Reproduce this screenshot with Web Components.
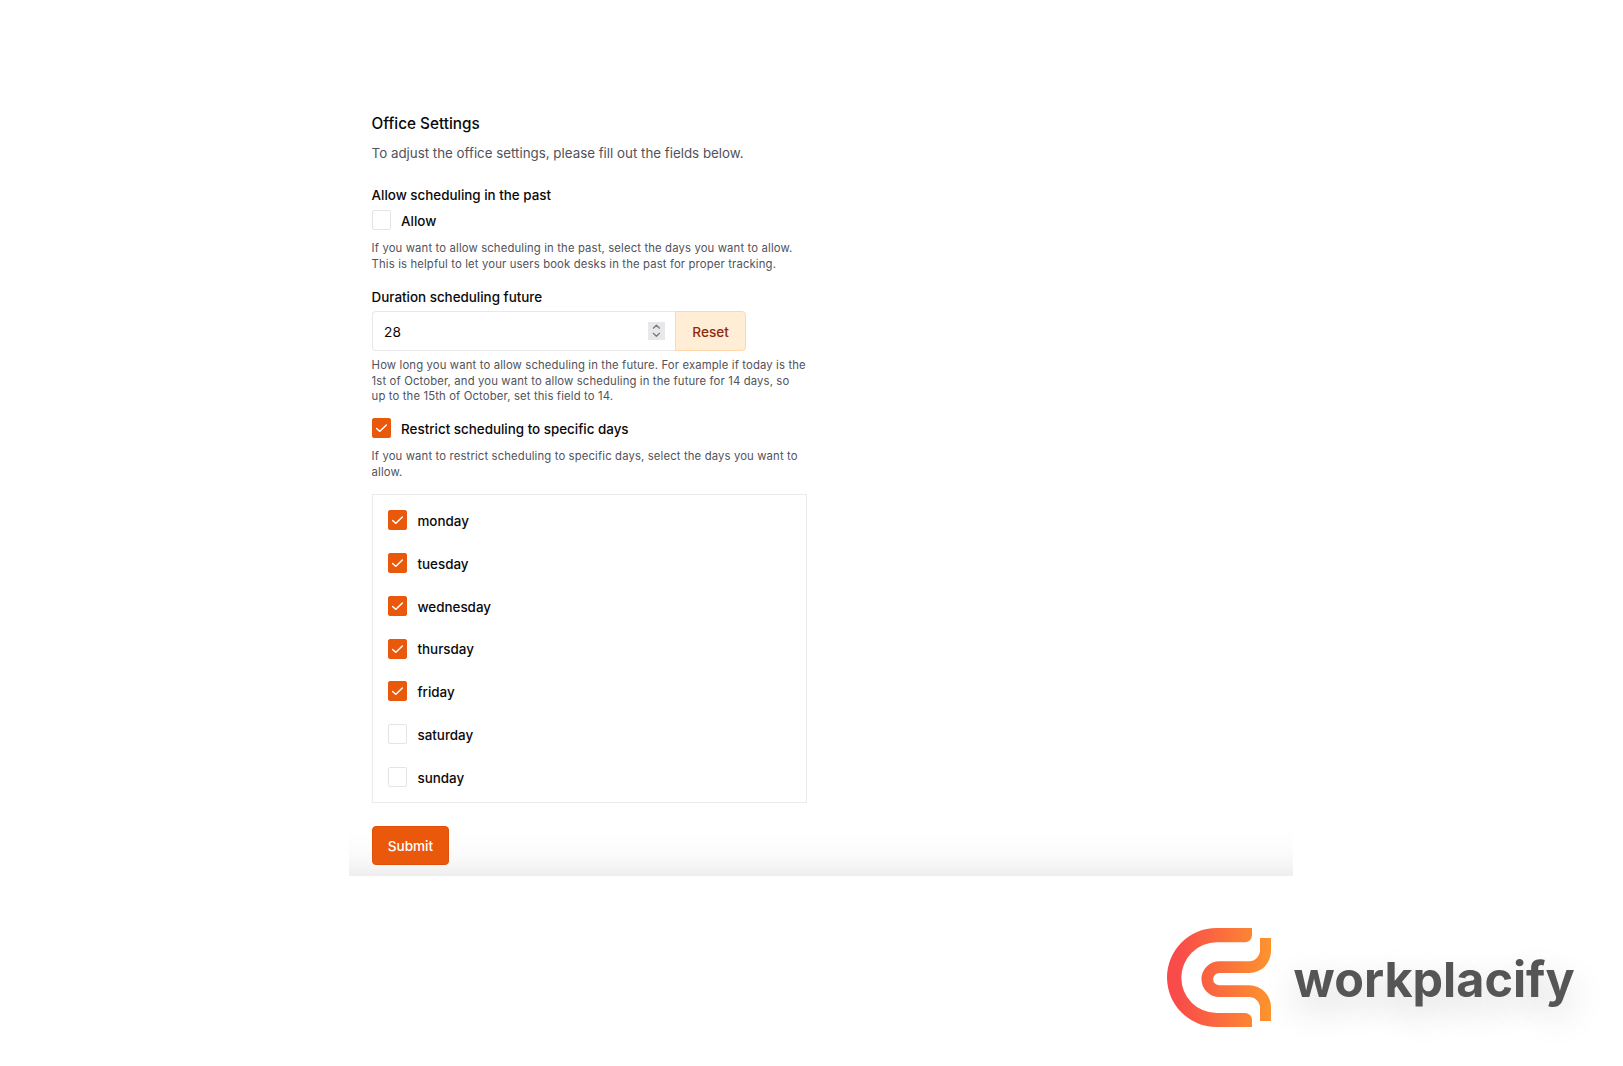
<!DOCTYPE html>
<html lang="en">
<head>
<meta charset="utf-8">
<title>Office Settings</title>
<style>
html,body{margin:0;background:#fff;height:1066px;overflow:hidden}
body{font-family:Inter,"Liberation Sans",sans-serif;color:#09090b}
</style>
</head>
<body>
<office-page>
  <settings-panel>
    <panel-header style="margin-top:112px">Office Settings<span slot="sub">To adjust the office settings, please fill out the fields below.</span></panel-header>
    <field-label style="margin-top:22px">Allow scheduling in the past</field-label>
    <check-box style="margin-top:5.3px">Allow</check-box>
    <help-text style="margin-top:10.7px">If you want to allow scheduling in the past, select the days you want to allow.<br>This is helpful to let your users book desks in the past for proper tracking.</help-text>
    <field-label style="margin-top:14.8px">Duration scheduling future</field-label>
    <number-field style="margin-top:4px" value="28">Reset</number-field>
    <help-text style="margin-top:7.3px">How long you want to allow scheduling in the future. For example if today is the<br>1st of October, and you want to allow scheduling in the future for 14 days, so<br>up to the 15th of October, set this field to 14.</help-text>
    <check-box style="margin-top:13.4px" checked>Restrict scheduling to specific days</check-box>
    <help-text style="margin-top:10.7px">If you want to restrict scheduling to specific days, select the days you want to<br>allow.</help-text>
    <day-list style="margin-top:13.8px">
      <check-box checked>monday</check-box>
      <check-box checked>tuesday</check-box>
      <check-box checked>wednesday</check-box>
      <check-box checked>thursday</check-box>
      <check-box checked>friday</check-box>
      <check-box>saturday</check-box>
      <check-box>sunday</check-box>
    </day-list>
    <submit-button style="margin-top:23px">Submit</submit-button>
  </settings-panel>
  <brand-logo>workplacify</brand-logo>
</office-page>
<script>
const define = (name, html) => customElements.define(name, class extends HTMLElement {
  constructor() {
    super();
    const t = document.createElement('template');
    t.innerHTML = typeof html === 'function' ? html(this) : html;
    this.attachShadow({mode: 'open'}).appendChild(t.content.cloneNode(true));
  }
});

define('office-page', `<style>
:host{display:flex;flex-direction:column;width:1623px;height:1066px;overflow:hidden;background:#fff}
</style><slot></slot>`);

define('settings-panel', `<style>
:host{display:flex;flex-direction:column;align-items:flex-start;box-sizing:border-box;width:944px;height:875.7px;flex:none;margin-left:349px;padding-left:22.6px;
background:linear-gradient(to bottom,#fff0,#00000003 45%,#00000007 70%,#00000011) bottom/100% 50px no-repeat}
</style><slot></slot>`);

define('panel-header', `<style>
:host{display:block;white-space:nowrap}
h1{margin:0;font-size:15.3px;line-height:24px;font-weight:500}
p{margin:7.2px 0 0;font-size:13.33px;line-height:20px;color:#52525b}
</style><h1><slot></slot></h1><p><slot name="sub"></slot></p>`);

define('field-label', `<style>
:host{display:block;font-size:13.4px;line-height:20px;font-weight:500;white-space:nowrap}
</style><slot></slot>`);

define('help-text', `<style>
:host{display:block;font-size:11.3px;letter-spacing:.14px;line-height:15.6px;color:#52525b;white-space:nowrap}
</style><slot></slot>`);

define('check-box', `<style>
:host{display:flex;align-items:center;gap:10.3px;height:20px;font-size:13.4px;font-weight:500;line-height:20px;white-space:nowrap}
i{display:block;box-sizing:border-box;width:19.2px;height:20px;border:1px solid #e4e4e7;border-radius:2px;background:#fff}
span{margin-top:1.4px}
svg{display:none;width:100%;height:100%}
:host([checked]) i{background:#ea580c;border-color:#ea580c}
:host([checked]) svg{display:block}
</style><i><svg viewBox="0 0 18 18" fill="none" stroke="#fff" stroke-width="1.5" stroke-linecap="round" stroke-linejoin="round"><path d="M3.8 9.5 7.2 12.5 14 5.8"/></svg></i><span><slot></slot></span>`);

define('number-field', el => `<style>
:host{display:flex;height:39.7px;font-size:13.4px;line-height:20px}
.in{box-sizing:border-box;width:303.5px;height:39.5px;display:flex;align-items:center;justify-content:space-between;border:1px solid #e8e8eb;border-right:0;border-radius:4px 0 0 4px;padding:0 10px 0 11.5px}
.sp{display:flex;width:17px;height:17.5px;background:#e8e8ea}
.in span{font-size:13.7px;margin-top:1.4px}
.re{box-sizing:border-box;width:71px;height:40px;display:flex;align-items:center;justify-content:center;background:#ffedd5;border:1px solid #fed7aa;border-radius:0 4px 4px 0;color:#8f2a0c;font-size:13.6px;font-weight:500;padding-top:1.4px}
</style><div class="in"><span>${el.getAttribute('value')}</span><div class="sp"><svg width="17" height="17.5" viewBox="0 0 17 17.5" fill="none" stroke="#77777a" stroke-width="1.2" stroke-linecap="round" stroke-linejoin="round"><path d="M5.3 6.2 8.4 3.2 11.5 6.2M5.3 11.3 8.4 14.3 11.5 11.3"/></svg></div></div><div class="re"><slot></slot></div>`);

define('day-list', `<style>
:host{display:flex;flex-direction:column;gap:22.8px;box-sizing:border-box;width:435px;height:309px;border:1px solid #ebebed;padding:15.3px 0 0 15.4px}
</style><slot></slot>`);

define('submit-button', `<style>
:host{display:flex;align-items:center;justify-content:center;box-sizing:border-box;width:77.7px;height:39px;background:#ea580c;border:1px solid #e14f08;border-radius:4px;color:#fff;font-size:13.6px;font-weight:500;padding-top:1.6px}
</style><slot></slot>`);

define('brand-logo', `<style>
:host{display:flex;margin:52.3px 0 0 1167px;height:99px;gap:22.6px;white-space:nowrap}
svg{flex:none;width:104px;height:99px}
span{font-size:48.5px;line-height:58px;font-weight:700;color:#555;margin-top:23.3px;text-shadow:0 12px 36px #0003}
</style><svg viewBox="51 54 312 297"><defs><linearGradient id="g" gradientUnits="userSpaceOnUse" x1="51" y1="0" x2="363" y2="0"><stop offset=".1" stop-color="#f84b4a"/><stop offset="1" stop-color="#fd942e"/></linearGradient></defs>
<path fill="url(#g)" d="M306 54V76A21 21 0 0 1 285 97H200A106 106 0 0 0 200 309H285A21 21 0 0 1 306 330V351H199.5A148.5 148.5 0 0 1 199.5 54ZM330 84H363V124A65 65 0 0 1 298 189H208A18.5 18.5 0 0 0 208 226H298A65 65 0 0 1 363 291V333H330V294A33 33 0 0 0 297 261H208A53.7 53.7 0 0 1 208 153.6H297A33 33 0 0 0 330 121Z"/></svg><span><slot></slot></span>`);
</script>
</body>
</html>
